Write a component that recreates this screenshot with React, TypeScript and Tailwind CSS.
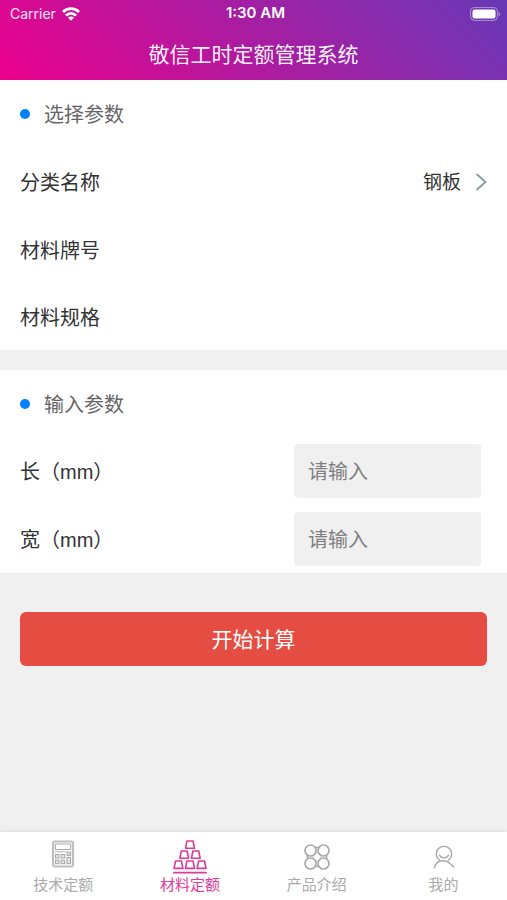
import { useState } from "react";
import type { ReactNode } from "react";

function WifiIcon() {
  return (
    <svg width="18" height="14" viewBox="0 0 18 14" fill="none" stroke="#fff" strokeWidth="2.8" aria-hidden="true">
      <path d="M1 5C5.400.6 12.600.6 17 5" />
      <path d="M4 8.600C6.700 5.700 11.300 5.700 14 8.600" />
      <path d="M6 10.700C7.500 9.200 10.500 9.200 12 10.700L9 13.800Z" fill="#fff" stroke="none" />
    </svg>
  );
}

function BatteryIcon() {
  return (
    <svg width="31" height="14" viewBox="0 0 31 14" aria-hidden="true">
      <rect x="0.600" y="0.600" width="26.800" height="12.800" rx="4" fill="none" stroke="#fff" strokeOpacity="0.450" />
      <rect x="2.500" y="2.500" width="23" height="9" rx="2" fill="#fff" />
      <path d="M28.600 5v4c1.900-.6 1.900-3.400 0-4Z" fill="#fff" fillOpacity="0.5" />
    </svg>
  );
}

function CalculatorIcon() {
  return (
    <svg width="24" height="28" viewBox="0 0 24 28" fill="none" stroke="currentColor" aria-hidden="true">
      <rect x="2" y="1.500" width="20" height="25" rx="2" strokeWidth="2.200" strokeOpacity="0.75" />
      <rect x="4.300" y="4" width="15.400" height="5.500" rx="0.8" strokeWidth="1.100" />
      <path d="M4 11.700h11" strokeWidth="1.200" strokeOpacity="0.7" />
      <g strokeWidth="1.100" fill="currentColor" fillOpacity="0.3">
        <rect x="4.500" y="14.500" width="3.500" height="3.500" />
        <rect x="10.200" y="14.500" width="3.500" height="3.500" />
        <rect x="4.500" y="20.200" width="3.500" height="3.500" />
        <rect x="10.200" y="20.200" width="3.500" height="3.500" />
        <rect x="16" y="12.200" width="3.500" height="3.300" />
        <rect x="16" y="17.500" width="3.500" height="6.200" />
      </g>
    </svg>
  );
}

function IngotsIcon() {
  return (
    <svg width="34" height="34" viewBox="0 0 34 34" fill="none" stroke="currentColor" strokeWidth="1.600" strokeLinejoin="round" aria-hidden="true">
      <path d="M14 1h6l1.500 7.300h-9z" />
      <path d="M8.300 11h5.800l1.500 7.300H6.800zM19.900 11h5.800l1.500 7.300h-8.800z" />
      <path d="M2.500 21h5.900l1.500 7.400H1zM14 21h6l1.500 7.400h-9zM25.600 21h5.900l1.500 7.400h-8.900z" />
      <path d="M1 32.700h32" strokeWidth="1.800" strokeLinecap="round" />
    </svg>
  );
}

function ProductsIcon() {
  return (
    <svg width="26" height="26" viewBox="0 0 26 26" fill="none" stroke="currentColor" strokeWidth="1.700" aria-hidden="true">
      <circle cx="6.500" cy="6.500" r="5.500" />
      <circle cx="19.500" cy="6.500" r="5.500" />
      <circle cx="6.500" cy="19.500" r="5.500" />
      <circle cx="19.500" cy="19.500" r="5.500" />
      <path d="M10.500 3.500h5M10.500 22.500h5M3.500 10.700v4.600M22.500 10.700v4.600" />
      <path d="M11 9h4M11 17h4M9 11v4M17 11v4" strokeWidth="1" strokeOpacity="0.6" />
    </svg>
  );
}

function PersonIcon() {
  return (
    <svg width="22" height="24" viewBox="0 0 22 24" fill="none" stroke="currentColor" strokeWidth="1.500" strokeLinecap="round" aria-hidden="true">
      <path d="M6.500 15.200a7.700 7.700 0 1 1 9 0" />
      <path d="M6.600 10.200c1.500 3.300 7.300 3.300 8.800 0" />
      <path d="M1.300 22.600c2.500-7.800 11.200-9 16.200-3.600L20.700 22" />
    </svg>
  );
}

function SectionTitle({ children }: { children: ReactNode }) {
  return (
    <h2 className="flex items-center gap-3.5 px-5 text-[20px] text-[#666]">
      <span className="size-2.5 rounded-full bg-[#0081ff]" />
      <span className="pt-0.5">{children}</span>
    </h2>
  );
}

function NumberField({ id, label }: { id: string; label: string }) {
  return (
    <div className="flex items-center justify-between pr-[26px] pl-5">
      <label htmlFor={id} className="pt-0.5 text-[20px]">
        {label}
      </label>
      <input
        id={id}
        inputMode="decimal"
        placeholder="请输入"
        className="h-[54px] w-[187px] rounded-sm bg-[#f0f0f0] px-3.5 pt-0.5 text-[20px] outline-none placeholder:text-[#808080]"
      />
    </div>
  );
}

const tabs = [
  { name: "技术定额", icon: <CalculatorIcon />, box: "h-[38px] pb-1.5" },
  { name: "材料定额", icon: <IngotsIcon />, box: "h-[38px]" },
  { name: "产品介绍", icon: <ProductsIcon />, box: "h-[38px]" },
  { name: "我的", icon: <PersonIcon />, box: "h-[38px]" },
];

export default function App() {
  const [active, setActive] = useState("材料定额");

  return (
    <div className="flex min-h-screen flex-col bg-[#f0f0f0] font-['Liberation_Sans','Noto_Sans_CJK_SC',sans-serif] text-[#333]">
      <header className="bg-[linear-gradient(45deg,#ec008c,#6739b6)] text-white">
        <div className="grid h-[27px] grid-cols-3 items-center pr-1.5 pl-2.5 font-[Inter,sans-serif] text-[14px]">
          <span className="flex items-center gap-1.5 text-white/90">
            Carrier
            <WifiIcon />
          </span>
          <span className="text-center text-[15px] font-semibold">1:30 AM</span>
          <span className="flex justify-end">
            <BatteryIcon />
          </span>
        </div>
        <h1 className="h-[53px] text-center text-[21px] leading-[55px] text-white/95">敬信工时定额管理系统</h1>
      </header>

      <main className="flex-1">
        <section className="grid min-h-[270px] auto-rows-fr bg-white">
          <SectionTitle>选择参数</SectionTitle>
          <div className="flex items-center justify-between px-5 pt-0.5">
            <label htmlFor="category" className="pt-0.5 text-[20px]">
              分类名称
            </label>
            <span className="flex items-center gap-3.5">
              <select id="category" className="appearance-none bg-transparent pt-0.5 text-right text-[19px] outline-none">
                <option>钢板</option>
              </select>
              <svg width="12" height="18" viewBox="0 0 12 18" fill="none" stroke="#8799a3" strokeWidth="1.800" aria-hidden="true">
                <path d="M1.500 1l9 8-9 8" />
              </svg>
            </span>
          </div>
          <div className="flex items-center px-5 pt-1 text-[20px]">材料牌号</div>
          <div className="flex items-center px-5 pt-1 text-[20px]">材料规格</div>
        </section>

        <section className="mt-5 grid min-h-[203px] auto-rows-fr bg-white">
          <SectionTitle>输入参数</SectionTitle>
          <NumberField id="length" label="长（mm）" />
          <NumberField id="width" label="宽（mm）" />
        </section>

        <div className="px-5 py-[39px]">
          <button type="button" className="h-[54px] w-full rounded-md bg-[#e54d42] pt-0.5 text-[21px] text-white">
            开始计算
          </button>
        </div>
      </main>

      <nav className="grid h-[68px] grid-cols-4 bg-white shadow-[0_-1px_3px_rgba(0,0,0,0.08)]">
        {tabs.map((tab) => (
          <button
            key={tab.name}
            type="button"
            onClick={() => setActive(tab.name)}
            className={`flex flex-col items-center pt-1.5 text-[15px] leading-[18px] ${
              active === tab.name ? "text-[#e03997]" : "text-[#aaa]"
            }`}
          >
            <span className={`flex items-center ${tab.box}`}>{tab.icon}</span>
            {tab.name}
          </button>
        ))}
      </nav>
    </div>
  );
}
